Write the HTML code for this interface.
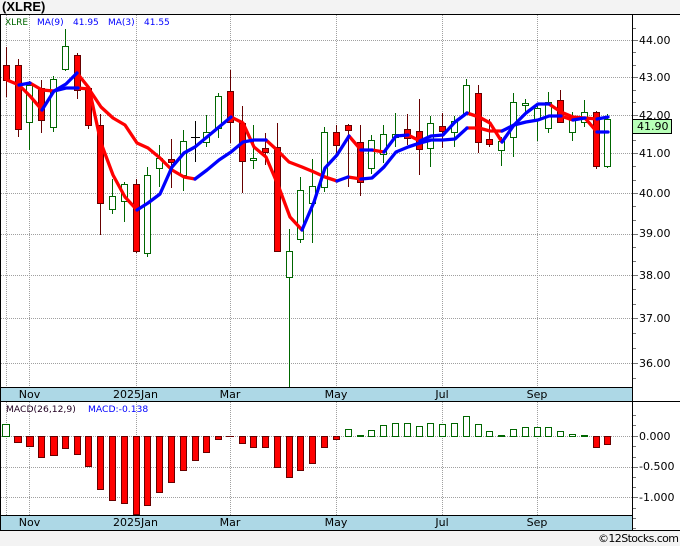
<!DOCTYPE html>
<html><head><meta charset="utf-8"><title>XLRE</title>
<style>
html,body{margin:0;padding:0;background:#f3f3f3;width:680px;height:546px;overflow:hidden}
svg{display:block;font-family:"DejaVu Sans",sans-serif}
text{font-size:11px;fill:#000}
.c{text-anchor:middle}
</style></head><body>
<svg width="680" height="546" viewBox="0 0 680 546" xmlns="http://www.w3.org/2000/svg">
<rect width="680" height="546" fill="#f3f3f3"/>
<text x="2" y="11" style="font:bold 13px 'Liberation Sans',sans-serif;fill:#000">(XLRE)</text>
<rect x="0" y="14" width="680" height="517" fill="#fff"/>
<rect x="1" y="388" width="631" height="13" fill="#add8e6"/>
<rect x="1" y="516" width="631" height="14" fill="#add8e6"/>

<g shape-rendering="crispEdges" fill="none" stroke="#a0a0a0" stroke-dasharray="1 1">
<path d="M6.5 15V387M29.5 15V387M136.5 15V387M230.5 15V387M336.5 15V387M442.5 15V387M537.5 15V387M6.5 402V515M29.5 402V515M136.5 402V515M230.5 402V515M336.5 402V515M442.5 402V515M537.5 402V515"/>
<path d="M1 40H632M1 77H632M1 115H632M1 153H632M1 193H632M1 234H632M1 275H632M1 318H632M1 363H632M1 436H632M1 467H632M1 497H632" transform="translate(0 .5)"/>
</g>

<g shape-rendering="crispEdges" fill="none" stroke-width="1">
<!-- wicks -->
<path stroke="#060" d="M29.5 81V150M53.5 76V132M65.5 29V71M112.5 179V214M124.5 182V222M147.5 167V257M159.5 145V187M183.5 130V191M206.5 115V147M218.5 93V138M253.5 125V169M289.5 229V387M300.5 177V243M312.5 159V243M324.5 127V192M371.5 135V174M383.5 125V163M395.5 113V147M430.5 116V167M454.5 116V147M466.5 79V113M501.5 137V166M513.5 93V157M525.5 99V115M537.5 103V141M548.5 92V133M572.5 112V141M584.5 100V127M607.5 114V168"/>
<path stroke="#000" d="M195.5 121V162M191 137.5H200"/>
<path stroke="#600" d="M6.5 47V97M18.5 59V137M41.5 80V133M77.5 53V99M88.5 88V129M100.5 114V235M136.5 179V253M171.5 139V188M230.5 70V143M242.5 106V193M265.5 133V165M277.5 123V252M336.5 125V153M348.5 124V187M360.5 125V196M407.5 114V145M419.5 99V175M442.5 113V148M478.5 85V153M489.5 119V147M560.5 90V122M596.5 111V169"/>
<!-- green bodies -->
<path stroke="#060" fill="#fff" d="M26.5 85.5h6v37h-6zM50.5 79.5h6v48h-6zM62.5 46.5h6v23h-6zM109.5 196.5h6v13h-6zM121.5 184.5h6v17h-6zM144.5 175.5h6v78h-6zM156.5 158.5h6v10h-6zM180.5 141.5h6v34h-6zM203.5 132.5h6v10h-6zM215.5 96.5h6v32h-6zM250.5 158.5h6v2h-6zM286.5 251.5h6v26h-6zM297.5 190.5h6v49h-6zM309.5 186.5h6v17h-6zM321.5 132.5h6v55h-6zM368.5 140.5h6v28h-6zM380.5 134.5h6v20h-6zM392.5 134.5h6v3h-6zM427.5 123.5h6v25h-6zM451.5 121.5h6v11h-6zM463.5 85.5h6v28h-6zM498.5 141.5h6v9h-6zM510.5 102.5h6v35h-6zM522.5 103.5h6v2h-6zM534.5 108.5h6v11h-6zM545.5 102.5h6v26h-6zM569.5 117.5h6v15h-6zM581.5 112.5h6v10h-6zM604.5 119.5h6v47h-6z"/>
<!-- red bodies -->
<path stroke="#600" fill="#f00" d="M3.5 65.5h6v15h-6zM15.5 65.5h6v64h-6zM38.5 88.5h6v32h-6zM74.5 55.5h6v35h-6zM85.5 88.5h6v37h-6zM97.5 125.5h6v78h-6zM133.5 184.5h6v67h-6zM168.5 159.5h6v3h-6zM227.5 91.5h6v31h-6zM239.5 123.5h6v38h-6zM262.5 148.5h6v4h-6zM274.5 147.5h6v104h-6zM333.5 132.5h6v13h-6zM345.5 125.5h6v5h-6zM357.5 142.5h6v40h-6zM404.5 129.5h6v9h-6zM416.5 131.5h6v18h-6zM439.5 126.5h6v5h-6zM475.5 93.5h6v49h-6zM486.5 139.5h6v5h-6zM557.5 100.5h6v22h-6zM593.5 112.5h6v54h-6z"/>
</g>

<!-- moving averages -->
<g fill="none" stroke-width="3.3" stroke-linejoin="round" stroke-linecap="round">
<path stroke="#f00" d="M7 80L19 85 30 96 42 110M77 73L89 88 101 143 113 175 125 197 137 210M231 117L243 123 254 147 266 157 278 185 290 217 302 230M349 136L361 150M372 150L384 152M408 135L420 141M467 113L479 117 490 123 502 142M549 104L561 112 573 117 585 118 597 132"/>
<path stroke="#f00" d="M30 83L42 90 54 91M78 88L89 89 101 107 113 118 125 125 137 143 148 148 160 158 172 170 184 177 195 179M266 140L277 150 289 162 302 167 314 172 325 177 337 181M348 177L361 179M467 128L479 128 490 131 502 131M561 116L573 120M585 118L597 119"/>
<path stroke="#00f" d="M42 110L54 91 66 84 77 73M137 210L148 203 160 194 172 167 184 153 195 147 207 137 219 127 231 117M302 230L314 202 325 168 337 155 349 136M361 150L372 150M384 152L396 136 408 135M420 141L431 136 443 135 455 122 467 113M502 142L514 125 526 113 538 104 549 104M597 132L608 132"/>
<path stroke="#00f" d="M19 85L30 83M54 91L66 88 78 88M195 179L207 170 219 160 231 152 243 142 254 140 266 140M337 181L348 177M361 179L372 178 384 167 396 152 408 147 420 143 431 140 443 140 455 139 467 128M502 131L514 125 526 122 538 120 549 116 561 116M573 120L585 118M597 119L608 117"/>
</g>

<!-- MACD bars -->
<g shape-rendering="crispEdges" stroke-width="1">
<path stroke="#060" fill="#fff" d="M2.5 424.5h7v12h-7zM345.5 429.5h6v7h-6zM368.5 430.5h6v6h-6zM380.5 425.5h6v11h-6zM392.5 423.5h6v13h-6zM404.5 423.5h6v13h-6zM416.5 426.5h6v10h-6zM427.5 423.5h6v13h-6zM439.5 424.5h6v12h-6zM451.5 423.5h6v13h-6zM463.5 416.5h6v20h-6zM475.5 424.5h6v12h-6zM486.5 431.5h6v5h-6zM510.5 429.5h6v7h-6zM522.5 427.5h6v9h-6zM534.5 427.5h6v9h-6zM545.5 427.5h6v9h-6zM557.5 431.5h6v5h-6zM569.5 434.5h6v2h-6z"/>
<path stroke="#060" fill="#060" d="M357.5 435.5h6v1h-6zM498.5 435.5h6v1h-6zM581.5 435.5h6v1h-6z"/>
<path stroke="#600" fill="#f00" d="M14.5 436.5h7v6h-7zM26.5 436.5h7v10h-7zM38.5 436.5h6v21h-6zM50.5 436.5h7v19h-7zM62.5 436.5h6v12h-6zM74.5 436.5h6v18h-6zM85.5 436.5h6v30h-6zM97.5 436.5h6v53h-6zM109.5 436.5h6v64h-6zM121.5 436.5h6v67h-6zM133.5 436.5h6v78h-6zM144.5 436.5h6v69h-6zM156.5 436.5h6v56h-6zM168.5 436.5h6v46h-6zM180.5 436.5h6v34h-6zM192.5 436.5h6v24h-6zM203.5 436.5h6v16h-6zM215.5 436.5h6v3h-6zM239.5 436.5h6v7h-6zM250.5 436.5h6v11h-6zM262.5 436.5h6v11h-6zM274.5 436.5h6v31h-6zM286.5 436.5h6v41h-6zM297.5 436.5h6v34h-6zM309.5 436.5h6v27h-6zM321.5 436.5h6v11h-6zM333.5 436.5h6v3h-6zM593.5 436.5h6v11h-6zM604.5 436.5h6v8h-6z"/>
<path stroke="#600" fill="none" d="M226 436.5h8"/>
</g>

<!-- frame -->
<g shape-rendering="crispEdges" fill="none" stroke="#000" stroke-width="1">
<path d="M0 14.5H680M0.5 14V531M0 387.5H632M0 401.5H680M0 515.5H632M0 530.5H680M632.5 14V531"/>
<path stroke="#777" d="M633 28.5h3M633 52.5h3M633 65.5h3M633 90.5h3M633 102.5h3M633 128.5h3M633 140.5h3M633 166.5h3M633 180.5h3M633 206.5h3M633 220.5h3M633 247.5h3M633 261.5h3M633 289.5h3M633 304.5h3M633 333.5h3M633 348.5h3M633 378.5h3M633 415.5h3M633 425.5h3M633 446.5h3M633 457.5h3M633 477.5h3M633 487.5h3M633 508.5h3M633 518.5h3M633 528.5h3"/>
<path stroke="#777" d="M633 40.5h5M633 77.5h5M633 115.5h5M633 153.5h5M633 193.5h5M633 234.5h5M633 275.5h5M633 318.5h5M633 363.5h5M633 436.5h5M633 467.5h5M633 497.5h5"/>
</g>

<!-- legends -->
<g style="font-size:9px">
<text x="5" y="25" style="font-size:9px;fill:#060">XLRE</text>
<text x="37" y="25" style="font-size:9px;fill:#00f">MA(9)</text>
<text x="73" y="25" style="font-size:9px;fill:#00f">41.95</text>
<text x="108" y="25" style="font-size:9px;fill:#00f">MA(3)</text>
<text x="144" y="25" style="font-size:9px;fill:#00f">41.55</text>
<text x="6" y="412" style="font-size:9.2px;fill:#202">MACD(26,12,9)</text>
<text x="88" y="412" style="font-size:9.2px;fill:#00f">MACD:-0.138</text>
</g>

<!-- date strips -->
<text class="c" x="29.5" y="398">Nov</text>
<text class="c" x="135.5" y="398">2025Jan</text>
<text class="c" x="230" y="398">Mar</text>
<text class="c" x="336" y="398">May</text>
<text class="c" x="442" y="398">Jul</text>
<text class="c" x="537" y="398">Sep</text>
<text class="c" x="29.5" y="526">Nov</text>
<text class="c" x="135.5" y="526">2025Jan</text>
<text class="c" x="230" y="526">Mar</text>
<text class="c" x="336" y="526">May</text>
<text class="c" x="442" y="526">Jul</text>
<text class="c" x="537" y="526">Sep</text>

<!-- axis labels -->
<text x="639" y="44">44.00</text>
<text x="639" y="81">43.00</text>
<text x="639" y="119">42.00</text>
<text x="639" y="157">41.00</text>
<text x="639" y="197">40.00</text>
<text x="639" y="237">39.00</text>
<text x="639" y="279">38.00</text>
<text x="639" y="322">37.00</text>
<text x="639" y="367">36.00</text>
<text x="639" y="440">0.000</text>
<text x="639" y="470">-0.500</text>
<text x="639" y="501">-1.000</text>

<rect x="632.5" y="119.5" width="39" height="14" fill="#b8ffb8" stroke="#000" shape-rendering="crispEdges"/>
<text x="637" y="130">41.90</text>

<text x="598" y="542" textLength="81" lengthAdjust="spacing" style="font-size:11px">©12Stocks.com</text>
</svg>
</body></html>
